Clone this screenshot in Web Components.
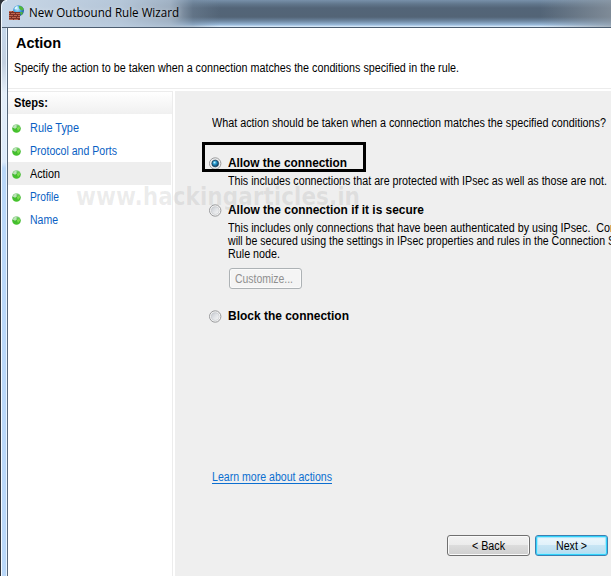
<!DOCTYPE html>
<html lang="en">
<head>
<meta charset="utf-8">
<title>New Outbound Rule Wizard</title>
<style>
html,body{margin:0;height:100%;overflow:hidden;background:#fff}
body{font:12px/13px "Liberation Sans",Arial,sans-serif;color:#000}
</style>
</head>
<body>
<wizard-window></wizard-window>
<script>
function define(name, html, setup) {
  const t = document.createElement('template');
  t.innerHTML = html;
  customElements.define(name, class extends HTMLElement {
    connectedCallback() {
      if (this.shadowRoot) return;
      this.attachShadow({mode: 'open'}).append(t.content.cloneNode(true));
      if (setup) setup.call(this, this.shadowRoot);
    }
  });
}

/* One line of text, condensed or widened to the width given by its "w" attribute. */
define('fit-text', `<style>:host{display:block;white-space:pre}span{display:inline-block;transform-origin:0 0}</style><span><slot></slot></span>`, function (r) {
  const s = r.querySelector('span');
  const w = +this.getAttribute('w');
  s.style.transform = 'scaleX(' + w / s.getBoundingClientRect().width + ')';
  this.style.width = w + 'px';
});

define('firewall-icon', `<style>:host{display:block;width:16px;height:16px}svg{display:block}</style>
<svg width="16" height="16" viewBox="0 0 16 16">
<defs><radialGradient id="g" cx=".4" cy=".35" r=".65"><stop offset="0" stop-color="#c9f0fb"/><stop offset=".5" stop-color="#4aa3df"/><stop offset="1" stop-color="#164f9c"/></radialGradient></defs>
<circle cx="9.500" cy="5.600" r="5.400" fill="url(#g)"/>
<path d="M10 1c2-.5 4 1 4.700 3l-1 1.500-2-.5-1.500-1.500zM11 7l3 .3-.8 2.200-1.200.8z" fill="#52b838"/>
<path d="M5.500 3l2-1.800 1.500.4-1 2-2 1z" fill="#e2faff"/>
<path d="M0 6h5v1h6v8H0z" fill="#7c3025"/>
<path d="M0 6h3v1H0zM4 6h1v1H4zM0 8h1v1H0zM2 8h4v1H2zM7 8h4v1H7zM0 10h4v1H0zM5 10h3v1H5zM9 10h2v1H9zM0 12h2v1H0zM3 12h4v1H3zM8 12h3v1H8zM0 14h4v1H0zM5 14h4v1H5z" fill="#c0674e"/>
</svg>`);

define('title-bar', `<style>
:host{display:flex;box-sizing:border-box;height:28px;padding:5px 0 0 9px;gap:4px;border-bottom:1px solid #4c5d70;
background:linear-gradient(90deg,#c6d7ea 0,#c4d3e3 30px,rgba(185,202,220,.95) 120px,rgba(170,186,203,.85) 170px,rgba(120,139,159,.4) 193px,transparent 220px,transparent 540px,rgba(145,155,165,.7) 611px),
linear-gradient(#7891aa 0,#61778c 4px,#536578 8px,#536476 17px,#6d86a0 21px,#9bbcdd 25px,#c9def2 26px,#dcecf9 27px)}
fit-text{font:12px/16px "Open Sans","Noto Sans",sans-serif;color:#000;text-shadow:0 0 5px #fff8}
</style><firewall-icon></firewall-icon><fit-text w="150">New Outbound Rule Wizard</fit-text>`);

define('page-header', `<style>
:host{display:block;box-sizing:border-box;height:61px;background:#fff;border-bottom:1px solid #ececec}
h1{margin:0;padding:7px 0 0 8px;font:bold 14px/17px "Liberation Sans",Arial,sans-serif}
fit-text.d{padding:10px 0 0 6px}
</style><h1><fit-text w="45">Action</fit-text></h1><fit-text class="d" w="445">Specify the action to be taken when a connection matches the conditions specified in the rule.</fit-text>`);

define('step-item', `<style>
:host{display:flex;height:23px;align-items:center;gap:9px;padding-left:4px;color:#0a5fc4}
:host([current]){background:#eee;color:#000}
svg{display:block;margin-top:1px}
</style><svg width="9" height="9" viewBox="0 0 9 9"><defs><linearGradient id="b" x2="0" y2="1"><stop stop-color="#8fd48a"/><stop offset=".45" stop-color="#43b833"/><stop offset="1" stop-color="#46c52a"/></linearGradient></defs><circle cx="4.500" cy="4.500" r="4.300" fill="url(#b)"/><path d="M.7 3.500Q1.500.8 4.500.5L4.700 3.700 3 4.800z" fill="#cfe9cc" opacity=".85"/><path d="M4.800 4L7.600 2.200 8 4.500 6 7z" fill="#8be854" opacity=".8"/></svg><slot></slot>`);

define('step-list', `<style>
:host{display:block;box-sizing:border-box;width:165px;border-right:1px solid #ececec;background:#fff}
.h{box-sizing:border-box;height:23px;border-top:1px solid #ececec;padding:4px 0 0 6px;font:bold 12px/15px "Liberation Sans",Arial,sans-serif;background:linear-gradient(#fff,#f0f0f0)}
nav{padding:2px 1px 0 0}
step-item fit-text{font-size:12px;line-height:15px;padding-top:1px}
</style><div class="h"><fit-text w="34">Steps:</fit-text></div><nav>
<step-item><fit-text w="49">Rule Type</fit-text></step-item>
<step-item><fit-text w="87">Protocol and Ports</fit-text></step-item>
<step-item current><fit-text w="30">Action</fit-text></step-item>
<step-item><fit-text w="29">Profile</fit-text></step-item>
<step-item><fit-text w="28">Name</fit-text></step-item></nav>`);

define('radio-option', `<style>
:host{display:grid;grid-template-columns:13px 1fr;column-gap:6px;align-items:center}
.l{font:bold 12px/15px "Liberation Sans",Arial,sans-serif}
svg{display:block}.dot{display:none}:host([checked]) .dot{display:block}
.b{grid-column:2;padding-top:4px}
</style><svg width="13" height="13" viewBox="0 0 13 13"><defs><linearGradient id="r" x2="1" y2="1"><stop stop-color="#c3c8ce"/><stop offset=".5" stop-color="#e2e4e7"/><stop offset="1" stop-color="#f8f8f8"/></linearGradient><radialGradient id="d" cx=".4" cy=".35" r=".65"><stop stop-color="#c5f3ff"/><stop offset=".4" stop-color="#249bd0"/><stop offset="1" stop-color="#103d62"/></radialGradient></defs>
<circle cx="6.200" cy="6.500" r="5.700" fill="#f6f6f6" stroke="#98999b"/><circle cx="6.200" cy="6.500" r="4" fill="url(#r)" stroke="#c3c6ca" stroke-width=".6"/><g class="dot"><circle cx="6.200" cy="6.500" r="3.300" fill="url(#d)" stroke="#173e5c" stroke-width=".8"/></g></svg>
<div class="l"><slot name="label"></slot></div><div class="b"><slot></slot></div>`);

define('push-button', `<style>
:host{display:block;width:83px;height:21px}
button{display:flex;box-sizing:border-box;width:100%;height:100%;padding:1px 0 0;align-items:center;justify-content:center;border:1px solid #707070;border-radius:3px;box-shadow:inset 0 0 0 1px #fafafa;background:linear-gradient(#f2f2f2,#ebebeb 50%,#dcdcdc 50%,#cfcfcf);font:12px/15px "Liberation Sans",Arial,sans-serif;color:#000}
:host([small]){width:73px}
:host([disabled]) button{padding-right:3px;border-color:#adb2b5;background:#f4f4f4;color:#8f8f8f}
:host([primary]) button{border-color:#3c7fb1;box-shadow:inset 0 0 0 1px #31d2fb,inset 0 0 1px 2px #a6e6fa;background:linear-gradient(#edf7fc,#dff1fa 50%,#c7e5f4 50%,#b5dcf0)}
</style><button><slot></slot></button>`);

define('action-page', `<style>
:host{display:flex;flex-direction:column;box-sizing:border-box;flex:1;min-width:0;background:#efefef;padding:26px 0 20px 34px;overflow:hidden}
.q{margin-left:3px;height:13px}
.one{margin-top:26px}.two{margin-top:15px}.three{margin-top:20px}
push-button{flex:none}
.cust{margin:7px 0 0 1px}
a{margin:auto 0 51px 3px;color:#0b6ed0;width:max-content;border-bottom:1px solid #0b6ed0;line-height:12px}
footer{display:flex;gap:5px;margin-left:238px}
</style>
<fit-text class="q" w="394">What action should be taken when a connection matches the specified conditions?</fit-text>
<radio-option class="one" checked><fit-text slot="label" w="119">Allow the connection</fit-text><fit-text w="379">This includes connections that are protected with IPsec as well as those are not.</fit-text></radio-option>
<radio-option class="two"><fit-text slot="label" w="196">Allow the connection if it is secure</fit-text><fit-text w="388">This includes only connections that have been authenticated by using IPsec.  Con</fit-text><fit-text w="387">will be secured using the settings in IPsec properties and rules in the Connection S</fit-text><fit-text w="52">Rule node.</fit-text><push-button class="cust" small disabled><fit-text w="58">Customize...</fit-text></push-button></radio-option>
<radio-option class="three"><fit-text slot="label" w="121">Block the connection</fit-text></radio-option>
<a><fit-text w="120">Learn more about actions</fit-text></a>
<footer><push-button><fit-text w="33">&lt; Back</fit-text></push-button><push-button small primary><fit-text w="31">Next &gt;</fit-text></push-button></footer>`);

define('wizard-window', `<style>
:host{display:flex;flex-direction:column;position:relative;width:611px;height:576px;overflow:hidden;background:#fff}
.main{display:flex;flex:1;min-height:0}
.edge{flex:none;box-sizing:border-box;width:8px;background:linear-gradient(90deg,#30343c 0 1px,#f4faff 1px 2px,transparent 2px 6px,#e8f4ff 6px 7px,#566679 7px),linear-gradient(#c6d7ea 0,#c3d0e0 35px,#e4eef8 65px,#dceafa 134px,#b9d7f8 140px)}
.col{display:flex;flex-direction:column;flex:1;min-width:0}
.body{display:flex;flex:1;gap:2px;min-height:0;padding-top:2px}
.mark{position:absolute;left:76px;top:182px;font:bold 24px/30px "DejaVu Sans",Verdana,sans-serif;color:rgba(110,110,110,.13);pointer-events:none}
.ring{position:absolute;box-sizing:border-box;left:202px;top:142px;width:164px;height:30px;border:3px solid #000}
.corner{position:absolute;left:0;top:0}
</style>
<title-bar></title-bar>
<div class="main"><div class="edge"></div><div class="col"><page-header></page-header><div class="body"><step-list></step-list><action-page></action-page></div></div></div>
<fit-text class="mark" w="284">www.hackingarticles.in</fit-text><div class="ring"></div>
<svg class="corner" width="9" height="28" viewBox="0 0 9 28"><path d="M0 0H6Q1 1 1 7V28H0z" fill="#30343c"/><path d="M7 .500Q1.500 1 1.500 7V28" fill="none" stroke="#f4faff"/><path d="M7.500 27V28" stroke="#566679"/></svg>`);
</script>
</body>
</html>
